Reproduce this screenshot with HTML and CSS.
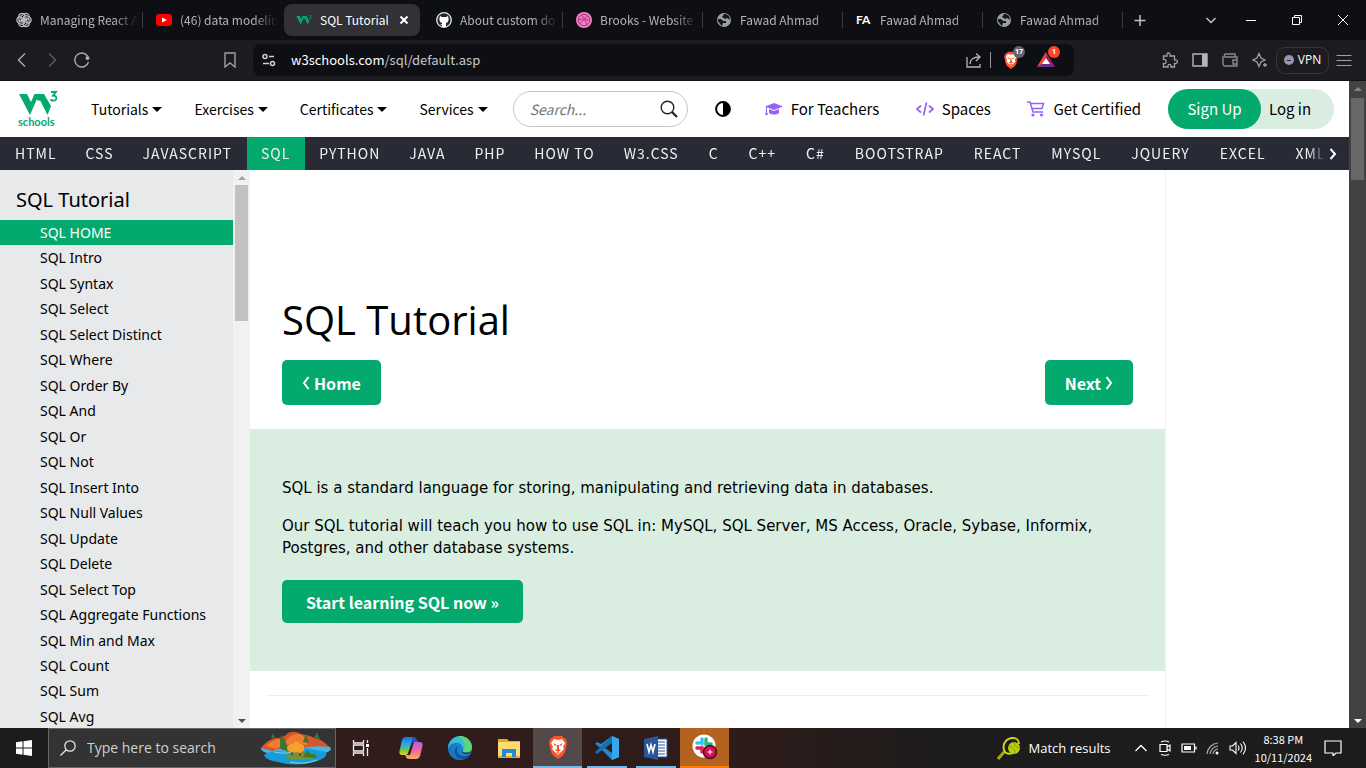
FILE: index.html
```html
<!DOCTYPE html>
<html lang="en">
<head>
<meta charset="utf-8">
<title>SQL Tutorial</title>
<link rel="stylesheet" href="styles.css">
</head>
<body>
<svg class="defs" aria-hidden="true">
  <linearGradient id="cool" x1="0" y1="0" x2="0" y2="1"><stop offset="0" stop-color="#1b6fe0"/><stop offset=".4" stop-color="#27aee6"/><stop offset=".7" stop-color="#6bc04f"/><stop offset="1" stop-color="#f0cf2b"/></linearGradient>
  <linearGradient id="warm" x1="0" y1="0" x2="0" y2="1"><stop offset="0" stop-color="#b65ce6"/><stop offset=".5" stop-color="#f0689b"/><stop offset="1" stop-color="#f8b05b"/></linearGradient>
  <symbol id="globe" viewBox="0 0 16 16"><circle cx="8" cy="8" r="7" fill="#9a9da1"/><path d="M2 7l3 0 2 2 3 0 0 2-3 0-1 3-2-2-2-3zM8 2l-2 3 3 2 2-1 3 2-1-4-3-2z" fill="#17181c"/></symbol>
  <symbol id="w3" viewBox="0 0 40 26"><path d="M1 3h8l4 8 3.500-8h9.500l7 12-3.500 9-7-14-4-1-6.500 15z" fill="#04aa6d"/><path d="M33 1h5l-3 3.500c5 0 4 6 0 5-1 0-2-.5-2.500-1" fill="none" stroke="#04aa6d" stroke-width="1.800"/></symbol>
  <symbol id="lion" viewBox="0 0 20 24"><path d="M6 1h8l2 2 2 1 1 4-2 9c-1 3-4 5-7 7-3-2-6-4-7-7L1 8l1-4 2-1z" fill="#fb542b"/><path d="M6 4l4 1 4-1 3 4-2 4 1 2-3 3-3 3-3-3-3-3 1-2-2-4z" fill="#fff"/><path d="M5 8l4 2-2 1zM15 8l-4 2 2 1zM9 10h2v4l2 1-3 2-3-2 2-1zM8 18l2-1 2 1-2 1z" fill="#fb542b"/></symbol>
</svg>

<div class="tabstrip">
  <div class="tab"><svg viewBox="0 0 16 16" class="fav"><g fill="none" stroke="#b9b9bc" stroke-width="1.300"><path id="petal" d="M8 2C11 0 14 3 13 6L8 9 5 7V4z"/><use href="#petal" transform="rotate(60 8 8)"/><use href="#petal" transform="rotate(120 8 8)"/><use href="#petal" transform="rotate(180 8 8)"/><use href="#petal" transform="rotate(240 8 8)"/><use href="#petal" transform="rotate(300 8 8)"/></g></svg><span>Managing React A</span></div>
  <div class="tab"><svg viewBox="0 0 16 16" class="fav"><rect y="2" width="16" height="12" rx="3" fill="#f00"/><path d="M6 5.500v5L11 8z" fill="#fff"/></svg><span>(46) data modelin</span></div>
  <div class="tab active"><svg viewBox="0 0 40 26" class="fav"><use href="#w3"/></svg><span>SQL Tutorial</span><button class="close" aria-label="Close tab"><svg viewBox="0 0 16 16"><path d="M4.500 4.500l7 7M11.500 4.500l-7 7" stroke="#fff" stroke-width="2"/></svg></button></div>
  <div class="tab"><svg viewBox="0 0 16 16" class="fav"><circle cx="8" cy="8" r="7.300" fill="#24292f" stroke="#e8e8e8" stroke-width="1.300"/><path d="M4 4l2 1h4l2-1 .7 3-.7 3-2 1v4H6v-2L4 12l2 0v-1L4 10 3.300 7z" fill="#fff"/></svg><span>About custom do</span></div>
  <div class="tab"><svg viewBox="0 0 16 16" class="fav"><circle cx="8" cy="8" r="8" fill="#f082c4"/><g fill="none" stroke="#b13384"><circle cx="8" cy="8" r="5.700"/><path d="M5.500 3c3 3 5 7 5 10M2.500 7.500c4 0 7-1 9.500-3.500M4 12c2-4 6-5 9.500-4"/></g></svg><span>Brooks - Website</span></div>
  <div class="tab"><svg viewBox="0 0 16 16" class="fav"><use href="#globe"/></svg><span>Fawad Ahmad</span></div>
  <div class="tab"><b class="fav fa">FA</b><span>Fawad Ahmad</span></div>
  <div class="tab"><svg viewBox="0 0 16 16" class="fav"><use href="#globe"/></svg><span>Fawad Ahmad</span></div>
  <button class="newtab" aria-label="New tab"><svg viewBox="0 0 16 16"><path d="M8 3v11M2.500 8.500h11" stroke="#c3c3c6" stroke-width="1.500"/></svg></button>
  <div class="window-buttons">
    <button aria-label="Search tabs"><svg viewBox="0 0 16 16"><path d="M3.500 6L8 10.500 12.500 6" stroke="#c3c3c6" stroke-width="1.500"/></svg></button>
    <button aria-label="Minimize"><svg viewBox="0 0 16 16"><path d="M3 8.500h10" stroke="#fff"/></svg></button>
    <button aria-label="Restore"><svg viewBox="0 0 16 16"><path d="M3.500 5.500h7v7h-7zM5.500 5.500v-2h7v7h-2" stroke="#fff"/></svg></button>
    <button aria-label="Close"><svg viewBox="0 0 16 16"><path d="M3 3l10 10M13 3L3 13" stroke="#fff"/></svg></button>
  </div>
</div>

<div class="toolbar">
  <div class="history">
    <button aria-label="Back"><svg viewBox="0 0 16 16"><path d="M11 1.500L4.500 8l6.500 6.500" stroke="#adadb0" stroke-width="1.400"/></svg></button>
    <button aria-label="Forward"><svg viewBox="0 0 16 16"><path d="M5 1.500L11.500 8 5 14.500" stroke="#5d5d61" stroke-width="1.400"/></svg></button>
    <button aria-label="Reload"><svg viewBox="0 0 16 16"><path d="M14.500 10A7 7 0 1 1 13.500 4" stroke="#adadb0" stroke-width="1.400"/><circle cx="13.500" cy="6" r="2" fill="#adadb0"/></svg></button>
    <button class="bookmark" aria-label="Bookmark"><svg viewBox="0 0 16 16"><path d="M3 1h10v14l-5-4-5 4z" stroke="#a0a0a4" stroke-width="1.400"/></svg></button>
  </div>
  <div class="address">
    <svg class="i16" viewBox="0 0 16 16"><g stroke="#d0d0d3" stroke-width="1.500"><circle cx="4" cy="4.500" r="2"/><path d="M8 4.500h5M2 11.500h6"/><circle cx="11.500" cy="11.500" r="2"/></g></svg>
    <p class="url"><b>w3schools.com</b>/sql/default.asp</p>
    <svg class="i16" viewBox="0 0 16 16"><path d="M1 5v10h13v-3M4 12c0-4 3-7 9-7M10 1.500L14 5l-4 4" stroke="#b5b5b8" stroke-width="1.300"/></svg>
    <i class="bar"></i>
    <span class="ext"><svg viewBox="0 0 20 24"><use href="#lion"/></svg><small class="count">17</small></span>
    <span class="ext"><svg viewBox="0 0 18 18"><path d="M9 1L0 16h18z" fill="#9e1f63"/><path d="M9 1L0 16l5-3 4-7z" fill="#ff4724"/><path d="M0 16h18l-5-3H5z" fill="#662d91"/><path d="M9 7l-4 6h8z" fill="#fff"/></svg><small class="count red">1</small></span>
  </div>
  <div class="tools">
    <button aria-label="Extensions"><svg viewBox="0 0 16 16"><path d="M1.500 4H5c-1-4 4-4 3 0h4.500v4c4-1 4 4 0 3.500V15H9c1-3.500-4-3.500-3 0H1.500v-3.500c3.500 1 3.500-5 0-4z" stroke="#a0a0a4" stroke-width="1.300"/></svg></button>
    <button aria-label="Sidebar"><svg viewBox="0 0 16 16"><path d="M1 2h14v12H1z" stroke="#b5b5b8" stroke-width="1.400"/><path d="M10 2h5v12h-5z" fill="#b5b5b8"/></svg></button>
    <button aria-label="Wallet"><svg viewBox="0 0 16 16"><path d="M13 5V2H3a2 2 0 0 0 0 3h12v9H3a2 2 0 0 1-2-2V4M15 8h-4v4h4" stroke="#8a8a8e" stroke-width="1.400"/></svg></button>
    <button aria-label="Leo"><svg viewBox="0 0 16 16"><path d="M7 1.500l2 4.500 4 2-4 2-2 4.500L5 10 1 8l4-2zM13 11v4M11 13h4" stroke="#a0a0a4" stroke-width="1.300"/></svg></button>
    <button class="vpn"><i>–</i>VPN</button>
    <button aria-label="Menu"><svg viewBox="0 0 16 16"><path d="M.5 3.500h15M.5 8.500h15M.5 13.500h15" stroke="#a0a0a4"/></svg></button>
  </div>
</div>

<div class="viewport">
  <div class="site">
    <header class="topbar">
      <a href="#" class="logo" aria-label="W3Schools"><svg viewBox="0 0 40 26"><use href="#w3"/></svg><span>schools</span></a>
      <nav class="menus"><a href="#">Tutorials<i></i></a><a href="#">Exercises<i></i></a><a href="#">Certificates<i></i></a><a href="#">Services<i></i></a></nav>
      <label class="search"><input type="text" placeholder="Search..." aria-label="Search"><svg viewBox="0 0 18 18"><circle cx="7.500" cy="7.500" r="6.300" stroke="#222" stroke-width="1.400"/><path d="M12 12l5 5" stroke="#222" stroke-width="2.200"/></svg></label>
      <button class="contrast" aria-label="Toggle dark mode"><svg viewBox="0 0 16 16"><circle cx="8" cy="8" r="6.900" stroke="#000" stroke-width="2"/><path d="M8 1a7 7 0 0 1 0 14z" fill="#000"/></svg></button>
      <nav class="promos">
        <a href="#"><svg viewBox="0 0 18 16"><path d="M9 2l9 3.500L9 9 0 5.500zM4 8l5 2 5-2v4c-3 2-7 2-10 0zM1 6h1v5l1 3H0l1-3z" fill="#9763f6"/></svg>For Teachers</a>
        <a href="#"><svg viewBox="0 0 18 16"><path d="M5 4.500L1 8l4 3.500M13 4.500L17 8l-4 3.500M10.500 1.500l-3 13" stroke="#9763f6" stroke-width="1.700"/></svg>Spaces</a>
        <a href="#"><svg viewBox="0 0 18 16"><path d="M0 1h3l3 10h10M3.500 2.500h13L15 7.500H5" stroke="#9763f6" stroke-width="1.500"/><circle cx="6" cy="14" r="1.600" fill="#9763f6"/><circle cx="14.500" cy="14" r="1.600" fill="#9763f6"/></svg>Get Certified</a>
      </nav>
      <div class="account"><a href="#" class="signup">Sign Up</a><a href="#" class="login">Log in</a></div>
    </header>
    <nav class="subjects">
      <div class="subject-list"><a href="#">HTML</a><a href="#">CSS</a><a href="#">JAVASCRIPT</a><a href="#" class="on">SQL</a><a href="#">PYTHON</a><a href="#">JAVA</a><a href="#">PHP</a><a href="#">HOW TO</a><a href="#">W3.CSS</a><a href="#">C</a><a href="#">C++</a><a href="#">C#</a><a href="#">BOOTSTRAP</a><a href="#">REACT</a><a href="#">MYSQL</a><a href="#">JQUERY</a><a href="#">EXCEL</a><a href="#">XML</a></div>
      <button class="more" aria-label="Scroll right"><svg viewBox="0 0 8 12"><path d="M1.500 1L6 6l-4.500 5" stroke="#fff" stroke-width="2"/></svg></button>
    </nav>
    <div class="columns">
      <aside class="side">
        <div class="side-body">
          <h2>SQL Tutorial</h2>
          <a href="#" class="on">SQL HOME</a><a href="#">SQL Intro</a><a href="#">SQL Syntax</a><a href="#">SQL Select</a><a href="#">SQL Select Distinct</a><a href="#">SQL Where</a><a href="#">SQL Order By</a><a href="#">SQL And</a><a href="#">SQL Or</a><a href="#">SQL Not</a><a href="#">SQL Insert Into</a><a href="#">SQL Null Values</a><a href="#">SQL Update</a><a href="#">SQL Delete</a><a href="#">SQL Select Top</a><a href="#">SQL Aggregate Functions</a><a href="#">SQL Min and Max</a><a href="#">SQL Count</a><a href="#">SQL Sum</a><a href="#">SQL Avg</a>
        </div>
        <div class="scroll light"><i class="up"></i><b></b><i class="down"></i></div>
      </aside>
      <main class="article">
        <h1>SQL Tutorial</h1>
        <div class="pager"><a href="#" class="btn"><svg viewBox="0 0 8 14"><path d="M6.500 1L2 7l4.500 6" stroke="#fff" stroke-width="2"/></svg>Home</a><a href="#" class="btn">Next<svg viewBox="0 0 8 14"><path d="M1.500 1L6 7l-4.500 6" stroke="#fff" stroke-width="2"/></svg></a></div>
        <section class="intro">
          <p>SQL is a standard language for storing, manipulating and retrieving data in databases.</p>
          <p>Our SQL tutorial will teach you how to use SQL in: MySQL, SQL Server, MS Access, Oracle, Sybase, Informix, Postgres, and other database systems.</p>
          <a href="#" class="btn start">Start learning SQL now »</a>
        </section>
        <hr>
      </main>
    </div>
  </div>
  <div class="scroll dark"><i class="up"></i><b></b><i class="down"></i></div>
</div>

<footer class="taskbar">
  <button class="task start-menu" aria-label="Start"><svg viewBox="0 0 16 16"><path d="M0 2.200L6.500 1.300v6.200H0zM7.500 1.200L16 0v7.500H7.500zM0 8.500h6.500v6.200L0 13.800zM7.500 8.500H16V16l-8.500-1.200z" fill="#fff"/></svg></button>
  <label class="tasksearch"><svg class="i16" viewBox="0 0 16 16"><circle cx="10" cy="6" r="5.200" stroke="#e6e6e6" stroke-width="1.300"/><path d="M6.300 9.700L.5 15.500" stroke="#e6e6e6" stroke-width="1.300"/></svg><input type="text" placeholder="Type here to search" aria-label="Type here to search">
    <svg class="scene" viewBox="0 0 72 34"><ellipse cx="36" cy="18" rx="35" ry="7" fill="#43b8e8"/><path d="M1 17Q8 8 16 7q8 0 12-5 7-3 13 1 8 1 14 4 8 2 14 9Q54 14 42 17 24 16 12 20z" fill="#d9542b"/><path d="M6 15q10-10 20-5 5-8 14-7 9 5 7 11-20-3-31 4z" fill="#ef7d31"/><path d="M20 17V8l2-4 4 7 2 9-6-1zM11 7l2-5 2 5zM43 11l3-8 3 9zM54 7l3-6 3 8z" fill="#3d7433"/><path d="M4 24q8-6 20-3 15-6 27-3l15 3q3 6-12 10-18 5-36 0Q5 29 4 24z" fill="#159ddb"/><path d="M14 21q15 3 22-2M30 31q14 3 27-2" stroke="#7bd5f2"/><ellipse cx="41" cy="25" rx="16" ry="4" fill="#6f9438"/><path d="M32 24V16M40 25V16" stroke="#884020" stroke-width="2"/><path d="M27 17q2-5 6-4 4-5 7 0 5-1 4 6-3 5-7 2-8 2-10-4z" fill="#f6a12c"/><path d="M43 26l4-7 4 4 4 0 2 4z" fill="#397b34"/></svg></label>
  <button class="task view" aria-label="Task view"><svg viewBox="0 0 18 18"><path d="M1.500 1v3h10V1M1.500 17v-3h10v3M1.500 6h10v6h-10zM15.500 1v3M15.500 9v8" stroke="#f0f0f0" stroke-width="1.300"/><path d="M14 5h3v3h-3z" fill="#fff"/></svg></button>
  <button class="task" aria-label="Copilot"><svg class="i24" viewBox="0 0 24 24"><path d="M6 1h8c3 0 3 3 5 5l-6 0-4 11c-1 2-2 2-3 2H3c-3 0-3-3-2-6L3 4c1-2 2-3 3-3z" fill="url(#cool)"/><path d="M13 1c3 0 4 3 5 5h-4l-2 4-1 0 2-6z" fill="#1f55c4"/><path d="M15 6h6c3 0 3 3 2 6l-2 8c-1 2-2 3-4 3h-7c-3 0-3-3-4-4l5 0z" fill="url(#warm)"/></svg></button>
  <button class="task" aria-label="Edge"><svg class="i24" viewBox="0 0 24 24"><circle cx="12" cy="12" r="12" fill="#1683ce"/><path d="M0 12C1 1 14-4 21 5c5 7 2 12-4 12-5 0-1-2-2-5C13 5 5 5 0 12z" fill="#35bfd4"/><path d="M10 0c7-1 14 4 14 11 0 5-5 7-9 5 4-7 1-13-5-16z" fill="#61d473"/><path d="M9 8c-7 4-4 16 7 16-9 1-17-6-15-13 2-4 5-4 8-3z" fill="#1b76c8"/><path d="M10 10c-4 8 4 13 13 8-4 7-14 7-16 0-1-4 0-7 3-8z" fill="#16529b"/><path d="M15 12c1 3-3 4 2 6 3 0 6-1 7-4-1 3-6 3-9 2z" fill="#31241f"/></svg></button>
  <button class="task" aria-label="File Explorer"><svg class="i24" viewBox="0 0 24 24"><path d="M1 3h9l2 2h11v17H1z" fill="#e9a91e"/><path d="M1 6h22v14H1z" fill="#ffdc72"/><path d="M5 13h14v8h-4v-4H9v4H5z" fill="#268ad2"/></svg></button>
  <button class="task open current" aria-label="Brave"><svg class="i24" viewBox="0 0 20 24"><use href="#lion"/></svg></button>
  <button class="task open" aria-label="Visual Studio Code"><svg class="i24" viewBox="0 0 24 24"><path d="M17 0l7 3v18l-7 3L3 10 0 8l2-2 4 2z" fill="#2489ca"/><path d="M2 18l-2-2L17 0v7z" fill="#1070b3"/><path d="M17 0l7 3v18l-7 3z" fill="#38a8ed"/><path d="M17 7v10l-7-5z" fill="#2c1c1a"/></svg></button>
  <button class="task open" aria-label="Word"><svg class="i24" viewBox="0 0 24 24"><path d="M12 3h11v18H12z" fill="#fff" stroke="#2b579a"/><path d="M14 6h7M14 9h7M14 12h7M14 15h7M14 18h7" stroke="#2b579a" stroke-width="1.200"/><path d="M0 3l14-3v24L0 21z" fill="#2b579a"/><path d="M3 8l2 8 2-7 2 7 2-8" stroke="#fff" stroke-width="1.600"/></svg></button>
  <button class="task open slack" aria-label="Slack"><svg class="i26" viewBox="0 0 26 26"><circle cx="12" cy="12" r="11.500" fill="#fff"/><g stroke-width="3.500" stroke-linecap="round"><path d="M10 5v5M5 9h2" stroke="#36c5f0"/><path d="M14 5v5h5" stroke="#2eb67d"/><path d="M5 14h5v4" stroke="#e01e5a"/><path d="M15 15h4" stroke="#ecb22e"/></g><circle cx="18" cy="18" r="6.500" fill="#d90e55" stroke="#4a101c" stroke-width="1.500"/><path d="M15.500 18h5M18 15.500v5" stroke="#fff"/></svg></button>
  <div class="tray">
    <div class="news"><svg class="i24" viewBox="0 0 24 24"><path d="M1 23l6-7" stroke="#a4a80b" stroke-width="3"/><path d="M8 16C4 9 9 2 16 2c4 0 6 3 6 6M7 15c2 3 6 3 9 2" stroke="#c9d413" stroke-width="2"/><circle cx="17" cy="12" r="6" fill="#bdcf0b"/><path d="M12 10c4 1 6 3 6 8M17 6c0 4 2 5 6 6" stroke="#7e940c"/></svg>Match results</div>
    <svg class="i16" viewBox="0 0 16 16"><path d="M2.500 11L8 5.500l5.500 5.500" stroke="#fff" stroke-width="1.300"/></svg>
    <svg class="i16" viewBox="0 0 16 16"><path d="M4 2q4-2 8 0M4 14.500q4 1.500 8 0M3 4.500h7v7H3zM10 7l3-2v6l-3-2" stroke="#fff" stroke-width="1.200"/></svg>
    <svg class="i16" viewBox="0 0 16 16"><path d="M1 4h12.500v8H1zM15 6.500v3" stroke="#fff" stroke-width="1.200"/><path d="M3 6h7v4H3z" fill="#fff"/></svg>
    <svg class="i16" viewBox="0 0 16 16"><path d="M2 14A12 12 0 0 1 13 3M5 14a9 9 0 0 1 8-8M8 14a6 6 0 0 1 5-5" stroke="#aaa" stroke-width="1.200"/><circle cx="12" cy="13" r="1.500" fill="#fff"/></svg>
    <svg class="i18" viewBox="0 0 18 16"><path d="M1 6h2.500L7 2.500v11L3.500 10H1zM9 5.500q2 2.500 0 5M11.500 3.500q3.500 4.500 0 9M14 1.500q5 6.500 0 13" stroke="#fff" stroke-width="1.100"/></svg>
    <time>8:38 PM<br>10/11/2024</time>
    <svg class="i18 note" viewBox="0 0 18 16"><path d="M1 1h16v12h-5l-3 3v-3H1z" stroke="#fff" stroke-width="1.200"/></svg>
  </div>
</footer>
</body>
</html>
```
FILE: styles.css
```css
* { box-sizing: border-box; }
body {
  margin: 0;
  height: 100vh;
  display: flex;
  flex-direction: column;
  overflow: hidden;
  background: #fff;
  color: #000;
  font: 13px/20px "Open Sans", "Segoe UI", sans-serif;
}
svg { fill: none; flex: none; display: block; }
.defs { position: absolute; width: 0; height: 0; }
button { border: 0; padding: 0; margin: 0; background: none; color: inherit; font: inherit; flex: none; }
button svg, .i16 { width: 16px; height: 16px; }
.i18 { width: 18px; height: 16px; }
a { color: inherit; text-decoration: none; }
p, h1, h2 { margin: 0; font-weight: 400; }
input { border: 0; padding: 0; min-width: 0; flex: 1; background: none; outline: 0; font: inherit; color: inherit; }

/* Browser tabs */
.tabstrip {
  flex: none;
  height: 40px;
  display: flex;
  align-items: center;
  gap: 4px;
  padding-left: 4px;
  background: #0e0f14;
  color: #b4b4b8;
  font: 12px/20px "Noto Sans CJK SC", sans-serif;
}
.tab { position: relative; width: 136px; height: 32px; display: flex; align-items: center; gap: 8px; padding: 0 2px 0 12px; border-radius: 8px; }
.tab span { flex: 1; overflow: hidden; white-space: nowrap; mask-image: linear-gradient(to right, #000 75%, transparent 100%); }
.tab::after { content: ""; position: absolute; right: -3px; top: 8px; width: 1px; height: 16px; background: #3a3a40; }
.tab.active { padding-right: 8px; background: #323136; color: #fff; }
.tab.active span { mask-image: none; }
.tab.active::after, .tab:has(+ .active)::after { display: none; }
.fav { width: 16px; height: 16px; flex: none; }
.fa { font: 700 12px/16px Lato, sans-serif; color: #fff; }
.newtab { margin-left: 8px; }
.window-buttons { margin-left: auto; display: flex; gap: 30px; padding-right: 15px; }
.window-buttons button:first-child { margin-right: -6px; }

/* Browser toolbar */
.toolbar { flex: none; height: 41px; display: flex; align-items: center; background: #1c1b20; border-bottom: 1px solid #121116; }
.history { width: 253px; display: flex; gap: 14px; padding: 0 15px 0 14px; }
.bookmark { margin-left: auto; }
.address { flex: 1; height: 32px; display: flex; align-items: center; padding: 0 17px 0 8px; border-radius: 8px; background: #0e0f14; color: #c8c8cb; font: 13px/20px "Noto Sans CJK SC", sans-serif; }
.url { flex: 1; padding-left: 14px; }
.url b { font-weight: 400; color: #fff; }
.bar { width: 1px; height: 16px; margin: 0 11px 0 8px; background: #97979b; }
.ext { position: relative; width: 35px; height: 18px; }
.ext:last-child { width: 20px; }
.ext svg { height: 18px; width: 18px; }
.count { position: absolute; left: 11px; top: -5px; width: 12px; height: 12px; border-radius: 6px; background: #5f6372; color: #fff; font: 700 7px/12px "Open Sans", sans-serif; text-align: center; }
.count.red { background: #ff4724; }
.tools { width: 292px; display: flex; align-items: center; justify-content: flex-end; gap: 14px; padding-right: 14px; color: #fff; }
.vpn { width: 53px; height: 27px; margin: 0 -7px 0 -6px; display: flex; align-items: center; justify-content: center; gap: 4px; border: 1px solid #36353b; border-radius: 9px; font-size: 12px; }
.vpn i { width: 10px; height: 10px; border-radius: 5px; background: #9495b0; color: #1c1b20; font: 700 9px/9px "Open Sans", sans-serif; }

/* Page */
.viewport { flex: 1; min-height: 0; display: flex; }
.site { flex: 1; min-width: 0; display: flex; flex-direction: column; font-family: "Noto Sans CJK SC", "Source Sans Pro", sans-serif; }
.topbar { flex: none; height: 56px; display: flex; align-items: center; padding: 0 15px 0 18px; font-size: 15px; line-height: 24px; white-space: nowrap; }
.logo { width: 73px; color: #04aa6d; font: 700 11px/10px Lato, sans-serif; }
.logo svg { width: 40px; height: 26px; }
.menus { display: flex; gap: 32px; font-size: 14px; }
.menus a, .promos a { display: flex; align-items: center; }
.menus i { margin-left: 4px; border: solid transparent; border-width: 5px 5px 0; border-top-color: #000; }
.search { width: 175px; height: 36px; margin-left: 25px; display: flex; align-items: center; padding: 0 9px 0 16px; border: 1px solid #c4c4c4; border-radius: 18px; font-size: 14px; }
.search input::placeholder { font-style: italic; color: #757575; opacity: 1; }
.search svg { width: 18px; height: 18px; }
.contrast { margin: 0 34px 0 27px; }
.promos { flex: 1; display: flex; justify-content: space-between; padding-right: 27px; }
.promos svg { width: 18px; height: 16px; margin-right: 8px; }
.account { display: flex; width: 166px; height: 40px; border-radius: 20px; background: #d9eee1; line-height: 40px; }
.signup { width: 93px; border-radius: 20px; background: #04aa6d; color: #fff; text-align: center; }
.login { padding-left: 8px; }

.subjects { flex: none; height: 33px; display: flex; align-items: center; padding-right: 12px; background: #282a35; color: #f1f1f1; font-size: 14px; line-height: 32px; letter-spacing: 1px; }
.subject-list { flex: 1; min-width: 0; height: 33px; display: flex; overflow: hidden; margin-right: 4px; mask-image: linear-gradient(to right, #000 calc(100% - 16px), transparent); }
.subject-list a { flex: none; padding: 0 15px 0 14px; }
.subject-list a:first-child { padding-left: 15px; }
.subject-list a:nth-child(n+10) { padding-left: 15px; }
.subject-list .on { background: #04aa6d; }
.more svg { width: 8px; height: 12px; }

.columns { flex: 1; min-height: 0; display: flex; }
.side { width: 250px; display: flex; flex: none; background: #e7e9eb; font: 14px/1.82 "Noto Sans", "Segoe UI", sans-serif; }
.side-body { flex: 1; overflow: hidden; }
.side h2 { padding: 15px 16px 5px; font-size: 20px; line-height: 30px; }
.side a { display: block; padding-left: 40px; }
.side .on { background: #04aa6d; color: #fff; }

.scroll { width: 17px; flex: none; display: flex; flex-direction: column; align-items: center; padding: 6px 0 5px; background: #f1f1f1; }
.scroll b { width: 13px; height: 136px; margin: 5px 0 auto; background: #c1c1c1; }
.scroll i { border: 4px solid transparent; }
.scroll .up { border-top: 0; border-bottom-color: #a3a3a3; }
.scroll .down { border-bottom: 0; border-top-color: #505050; }
.dark { background: #424242; }
.dark b { height: 82px; margin-top: 7px; background: #686868; }
.dark .up { border-bottom-color: #868686; }
.dark .down { border-top-color: #fff; }

.article { flex: 1; min-width: 0; margin-right: 183px; border-right: 1px solid #f1f1f1; overflow: hidden; }
.article h1 { padding: 120px 32px 10px; font: 40px/60px "Open Sans", "Segoe UI", sans-serif; }
.pager { display: flex; justify-content: space-between; padding: 0 32px 24px; }
.btn { display: inline-flex; align-items: center; gap: 4px; height: 45px; padding: 0 20px; border-radius: 5px; background: #04aa6d; color: #fff; font-size: 16px; font-weight: 700; line-height: 24px; }
.btn svg { width: 8px; height: 14px; }
.intro { height: 242px; padding: 48px 32px; background: #d9eee1; font: 15px/22px "DejaVu Sans", Verdana, sans-serif; }
.intro p { margin-bottom: 16px; }
.start { height: 43px; margin-top: 5px; padding: 0 24px; font-family: "Noto Sans CJK SC", sans-serif; }
hr { margin: 24px 16px; border: 0; border-top: 1px solid #eee; }

/* Taskbar */
.taskbar { flex: none; height: 40px; display: flex; background: linear-gradient(to right, #1d1b1b 48px, #311d1b 336px, #2e1c1a 740px, #1d1c1c 940px); color: #fff; }
.task { width: 49px; height: 40px; display: grid; place-items: center; }
.task svg { width: 18px; height: 18px; }
.start-menu { width: 48px; }
.view { width: 50px; }
.start-menu svg { width: 16px; height: 16px; }
.task .i24, .i24 { width: 24px; height: 24px; }
.task .i26 { width: 26px; height: 26px; }
.tasksearch { width: 288px; display: flex; align-items: center; gap: 11px; padding: 0 3px 0 11px; border: 1px solid #666; background: #333; color: #ddd; font-size: 14px; }
.tasksearch input::placeholder { color: #d0d0d0; opacity: 1; }
.scene { width: 72px; height: 34px; }
.open { background: linear-gradient(#76b9ed, #76b9ed) center bottom / 40px 2px no-repeat; }
.current { background: #544949; border-bottom: 2px solid #76b9ed; }
.slack { background: #b3621f; border-bottom: 2px solid #ff7a00; }
.tray { margin-left: auto; display: flex; align-items: center; gap: 8px; padding-right: 24px; }
.news { display: flex; align-items: center; gap: 8px; margin-right: 14px; font-size: 13px; }
.tray time { font: 11px/18px "Noto Sans CJK SC", sans-serif; text-align: center; }
.note { margin-left: 4px; }
```
